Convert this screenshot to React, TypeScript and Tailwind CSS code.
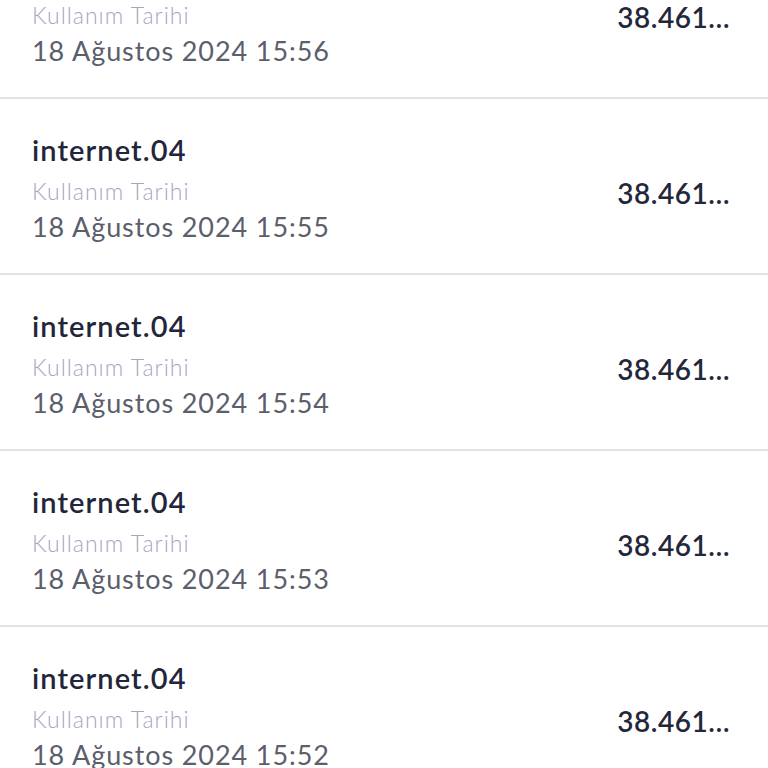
import React from "react";

const rows = [
  { title: "internet.04", date: "18 Ağustos 2024 15:56" },
  { title: "internet.04", date: "18 Ağustos 2024 15:55" },
  { title: "internet.04", date: "18 Ağustos 2024 15:54" },
  { title: "internet.04", date: "18 Ağustos 2024 15:53" },
  { title: "internet.04", date: "18 Ağustos 2024 15:52" },
];

export default function App() {
  return (
    <div className="h-[768px] w-[768px] overflow-hidden bg-white" style={{ fontFamily: "Lato, 'Noto Sans', sans-serif" }}>
      <div className="-mt-[77px] flex flex-col">
        {rows.map((r, i) => (
          <div key={i} className="flex h-[176px] items-center justify-between border-b-2 border-[#e4e4e8] pl-8 pr-[38px]">
            <div className="flex flex-col self-start pt-[33px]">
              <div className="text-[29px] leading-[36px] font-semibold tracking-[1.1px] text-[#23263a]">{r.title}</div>
              <div className="mt-[8px] text-[23px] leading-[30px] font-light tracking-[1px] text-[#a6a6bf]">Kullanım Tarihi</div>
              <div className="mt-[3px] text-[27px] leading-[36px] tracking-[0.9px] text-[#5b5e6b]">{r.date}</div>
            </div>
            <div className="pt-[14px] text-[28px] leading-[36px] font-semibold tracking-[0.5px] text-[#24273a]">38.461…</div>
          </div>
        ))}
      </div>
    </div>
  );
}
